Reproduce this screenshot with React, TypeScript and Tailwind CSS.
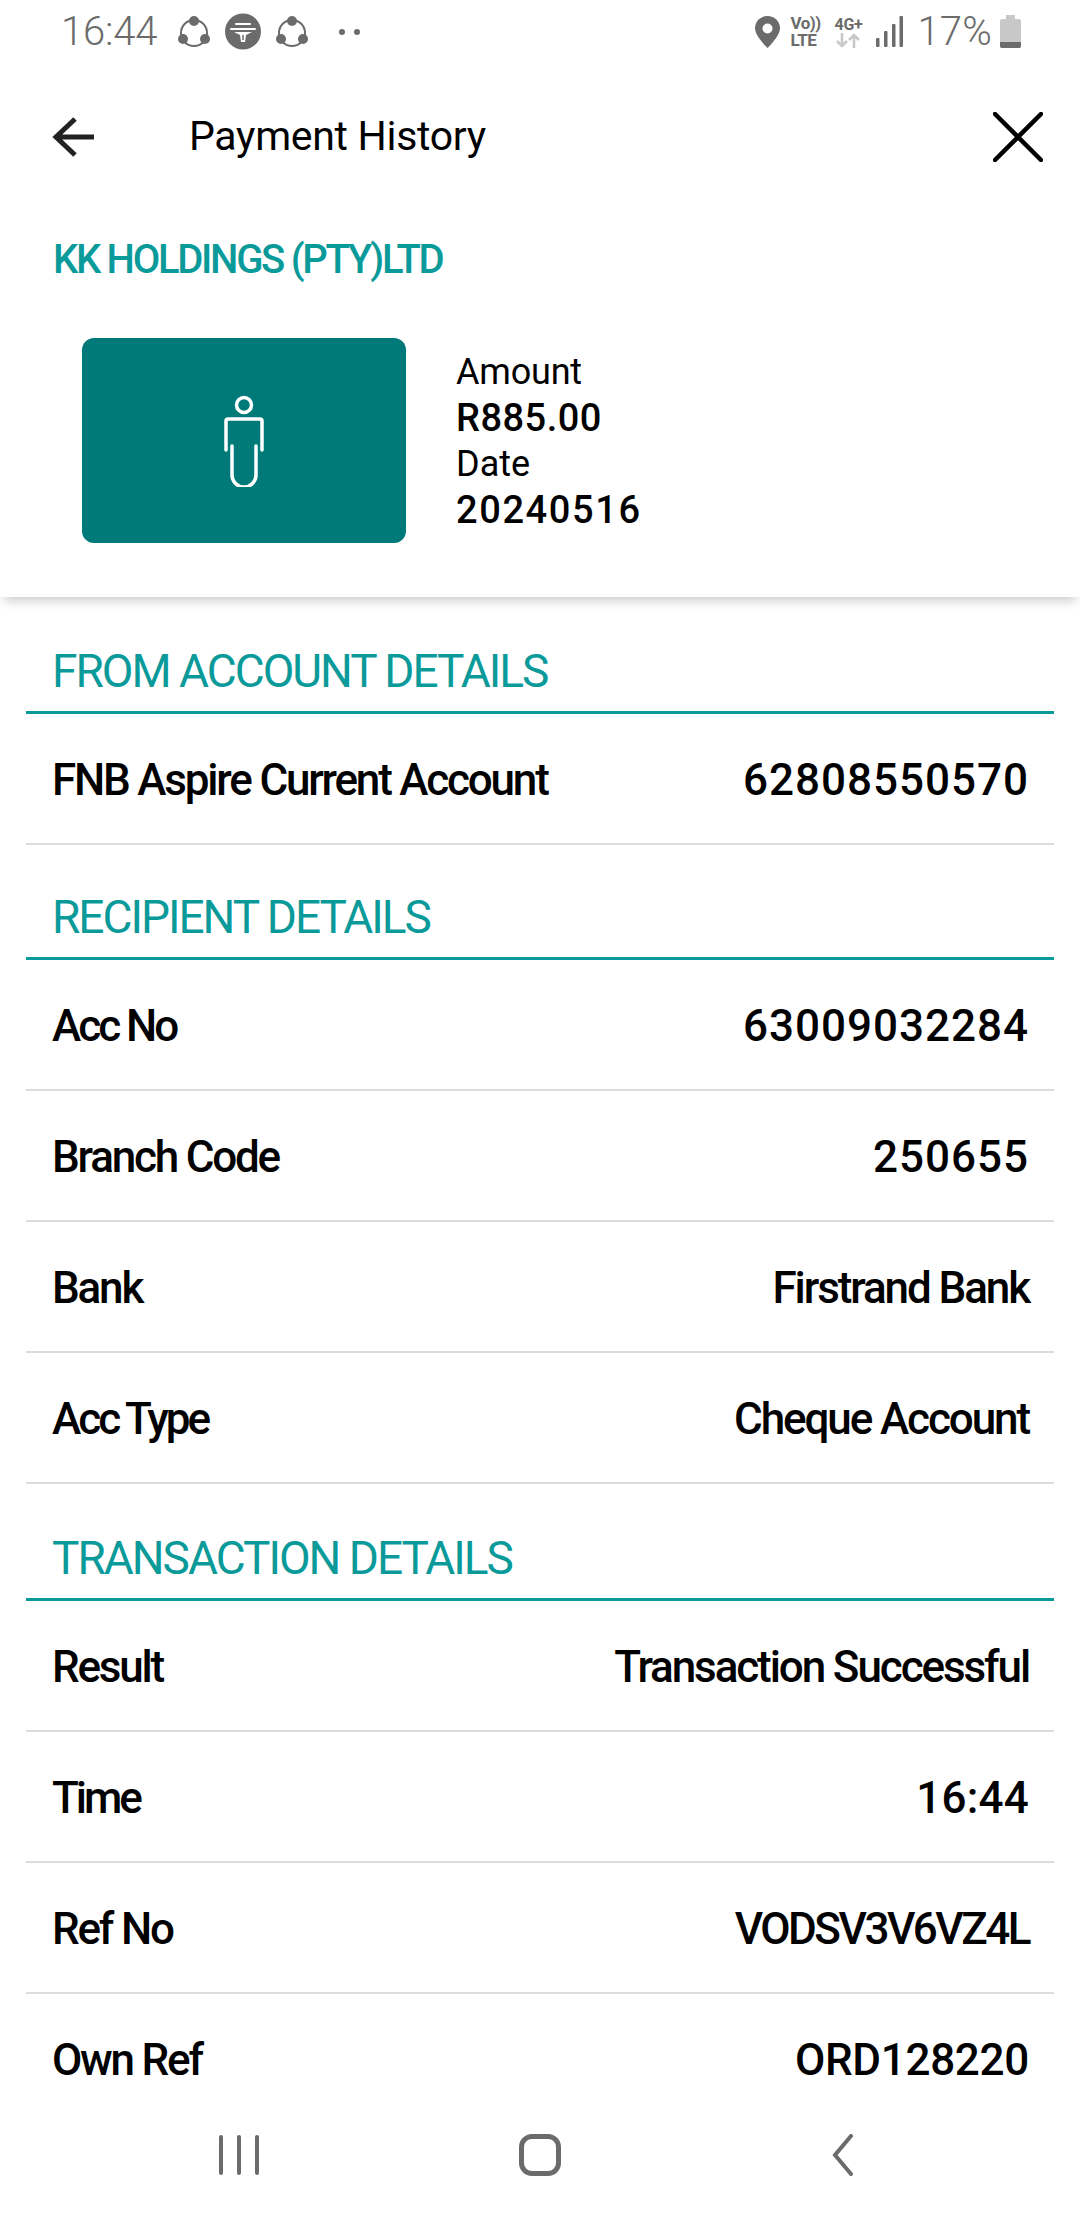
import React from 'react';

const Share = () => (
  <svg width="34" height="34" viewBox="0 0 34 34" fill="none">
    <circle cx="17" cy="18" r="13" stroke="#6b6b6b" strokeWidth="2" />
    <circle cx="17" cy="6" r="5" fill="#6b6b6b" />
    <circle cx="6" cy="24" r="5" fill="#6b6b6b" />
    <circle cx="28" cy="24" r="5" fill="#6b6b6b" />
  </svg>
);

const TowerBadge = () => (
  <svg width="36" height="37" viewBox="0 0 36 37">
    <circle cx="18" cy="18.5" r="18" fill="#6b6b6b" />
    <path d="M11 11h14M6 16h24" stroke="#fff" strokeWidth="2" strokeLinecap="round" />
    <path d="M9 19h18l-6 3-1 7h-4l-1-7z" fill="#fff" />
    <path d="M18 22v5" stroke="#6b6b6b" strokeWidth="1.5" />
  </svg>
);

const StatusBar = () => (
  <div className="h-[60px] flex items-center justify-between pl-[61px] pr-[59px] pt-[3px] text-[#6b6b6b]">
    <div className="flex items-center">
      <span className="text-[40px] font-light tracking-[-0.2px] leading-none">16:44</span>
      <div className="ml-[20px] flex items-center gap-[14px]">
        <Share />
        <TowerBadge />
        <Share />
      </div>
      <div className="ml-[30px] flex gap-[9px]">
        <div className="w-[6px] h-[6px] rounded-full bg-[#6b6b6b]" />
        <div className="w-[6px] h-[6px] rounded-full bg-[#6b6b6b]" />
      </div>
    </div>
    <div className="flex items-center">
      <svg width="25" height="32" viewBox="0 0 25 32">
        <path d="M12.5 0C5.6 0 0 5.4 0 12.2 0 20 12.5 32 12.5 32S25 20 25 12.2C25 5.4 19.4 0 12.5 0z" fill="#6b6b6b" />
        <circle cx="12.5" cy="12.5" r="5" fill="#fff" />
      </svg>
      <div className="ml-[10px] w-[32px] flex flex-col text-[17px] font-bold leading-[17px] tracking-[-0.5px]">
        <span>Vo))</span>
        <span>LTE</span>
      </div>
      <div className="ml-[10px] w-[32px] flex flex-col items-center">
        <span className="text-[16px] font-bold leading-[17px] tracking-[-0.3px]">4G+</span>
        <svg width="24" height="15" viewBox="0 0 24 15" fill="none" strokeWidth="2.6">
          <path d="M6 0v13M1 8l5 5 5-5" stroke="#c8c8c8" />
          <path d="M18 15V2M13 7l5-5 5 5" stroke="#c8c8c8" />
        </svg>
      </div>
      <svg className="ml-[12px]" width="27" height="31" viewBox="0 0 27 31" fill="#6b6b6b">
        <rect x="0" y="22" width="3.5" height="9" rx="1" />
        <rect x="8" y="15" width="3.5" height="16" rx="1" />
        <rect x="16" y="8" width="3.5" height="23" rx="1" />
        <rect x="23.5" y="0" width="3.5" height="31" rx="1" />
      </svg>
      <span className="ml-[14px] text-[40px] font-light leading-none tracking-[0.2px]">17%</span>
      <svg className="ml-[8px]" width="21" height="33" viewBox="0 0 21 33">
        <rect x="6" y="0" width="9" height="5" fill="#c8c8c8" />
        <rect x="0" y="4" width="21" height="29" rx="2" fill="#c8c8c8" />
        <path d="M0 27h21v4a2 2 0 0 1-2 2H2a2 2 0 0 1-2-2z" fill="#6b6b6b" />
      </svg>
    </div>
  </div>
);

const Section = ({ title, head = 'h-[115px]', children }: { title: string; head?: string; children: React.ReactNode }) => (
  <section className="mx-[26px]">
    <div className={`${head} flex items-end pl-[26px] pb-[12px] border-b-[3px] border-[#0b9a9a]`}>
      <h2 className="text-[46px] leading-[56px] text-[#0b9a9a] tracking-[-2px]">{title}</h2>
    </div>
    {children}
  </section>
);

const Row = ({ label, value, lt = 'tracking-[-2.2px]', vt = 'tracking-[-2.1px]' }: { label: string; value: string; lt?: string; vt?: string }) => (
  <div className="h-[131px] flex items-center justify-between pl-[26px] pr-[25px] pt-[2px] border-b-2 border-[#dcdcdc] font-medium text-[44px] text-black">
    <span className={lt}>{label}</span>
    <span className={vt}>{value}</span>
  </div>
);

export default function App() {
  return (
    <div className="w-[1080px] h-[2220px] bg-white overflow-hidden relative font-['Roboto',sans-serif]">
      <StatusBar />

      {/* Header */}
      <header className="h-[537px] bg-white shadow-[0_8px_10px_-4px_rgba(0,0,0,0.2)] relative">
        <div className="h-[152px] pt-[1px] flex items-center pl-[52px] pr-[37px]">
          <svg width="42" height="42" viewBox="0 0 42 42" fill="none" stroke="#222" strokeWidth="5">
            <path d="M43 21H5M23 3L4 21l19 18" />
          </svg>
          <h1 className="ml-[95px] text-[41px] tracking-[-0.3px] text-black flex-1">Payment History</h1>
          <svg width="50" height="50" viewBox="0 0 50 50" fill="none" stroke="#000" strokeWidth="4.5" strokeLinecap="round">
            <path d="M2 2l46 46M48 2L2 48" />
          </svg>
        </div>
        <div className="mt-[25px] pl-[53px] text-[40px] font-medium leading-[46px] tracking-[-2.3px] text-[#0b9a9a]">KK HOLDINGS (PTY)LTD</div>
        <div className="mt-[55px] pl-[82px] flex items-center">
          <div className="w-[324px] h-[205px] rounded-[12px] bg-[#007a78] flex items-center justify-center">
            <svg width="40" height="92" viewBox="0 0 40 92" fill="none" stroke="#fff" strokeWidth="3.5">
              <circle cx="20" cy="10" r="7.5" />
              <path d="M2 55V26a2 2 0 0 1 2-2h32a2 2 0 0 1 2 2v29" strokeLinecap="round" />
              <path d="M8 51v29a12 12 0 0 0 24 0V51" strokeLinecap="round" />
            </svg>
          </div>
          <div className="ml-[50px] leading-[46px] text-black">
            <div className="text-[36px] tracking-[-0.2px]">Amount</div>
            <div className="text-[38px] font-medium tracking-[0.5px]">R885.00</div>
            <div className="text-[36px] tracking-[0px]">Date</div>
            <div className="text-[38px] font-medium tracking-[1.6px]">20240516</div>
          </div>
        </div>
      </header>

      <main className="pt-[2px]">
        <Section title="FROM ACCOUNT DETAILS">
          <Row label="FNB Aspire Current Account" value="62808550570" vt="tracking-[1px]" />
        </Section>
        <Section title="RECIPIENT DETAILS">
          <Row label="Acc No" value="63009032284" lt="tracking-[-3px]" vt="tracking-[1px]" />
          <Row label="Branch Code" value="250655" vt="tracking-[1px]" />
          <Row label="Bank" value="Firstrand Bank" />
          <Row label="Acc Type" value="Cheque Account" lt="tracking-[-3px]" />
        </Section>
        <Section title="TRANSACTION DETAILS" head="h-[117px]">
          <Row label="Result" value="Transaction Successful" />
          <Row label="Time" value="16:44" lt="tracking-[-3px]" vt="tracking-[0.2px]" />
          <Row label="Ref No" value="VODSV3V6VZ4L" vt="tracking-[-2.5px]" />
          <Row label="Own Ref" value="ORD128220" vt="tracking-[-0.3px]" />
        </Section>
      </main>

      {/* Android nav bar, sits over the scrolled content */}
      <nav className="absolute left-0 right-0 bottom-0 h-[124px] bg-white">
        <div className="absolute left-[219px] top-[39px] flex gap-[14px]">
          <div className="w-[4px] h-[40px] rounded-full bg-[#6b6b6b]" />
          <div className="w-[4px] h-[40px] rounded-full bg-[#6b6b6b]" />
          <div className="w-[4px] h-[40px] rounded-full bg-[#6b6b6b]" />
        </div>
        <div className="absolute left-[519px] top-[38px] w-[42px] h-[42px] rounded-[13px] border-[5px] border-[#6b6b6b]" />
        <svg className="absolute left-[829px] top-[38px]" width="26" height="42" viewBox="0 0 26 42" fill="none" stroke="#6b6b6b" strokeWidth="4" strokeLinecap="round">
          <path d="M22 2L6 21l16 19" />
        </svg>
      </nav>
    </div>
  );
}
